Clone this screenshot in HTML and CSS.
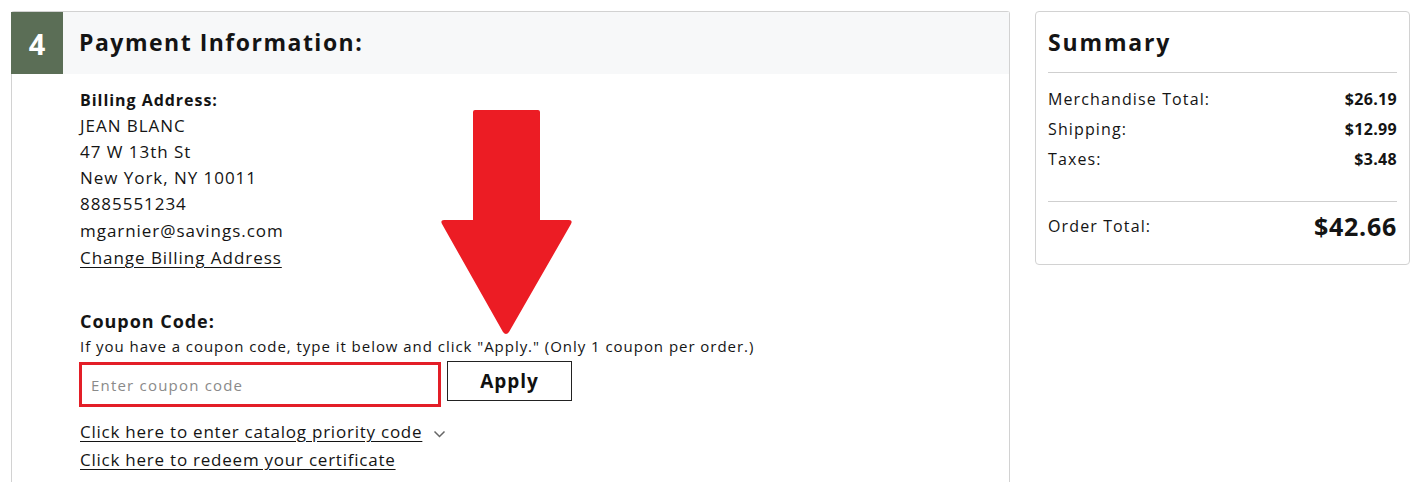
FILE: index.html
```html
<!DOCTYPE html>
<html>
<head>
<meta charset="utf-8">
<link rel="stylesheet" href="styles.css">
</head>
<body>
<div class="page">
  <section class="card pay">
    <div class="pay-head">
      <div class="step">4</div>
      <h2 class="pay-title">Payment Information:</h2>
    </div>
    <div class="pay-body">
      <div class="label">Billing Address:</div>
      <div class="line">JEAN BLANC</div>
      <div class="line">47 W 13th St</div>
      <div class="line">New York, NY 10011</div>
      <div class="line">8885551234</div>
      <div class="line">mgarnier@savings.com</div>
      <a class="line link" href="#">Change Billing Address</a>

      <div class="coupon-label">Coupon Code:</div>
      <div class="coupon-desc">If you have a coupon code, type it below and click "Apply." (Only 1 coupon per order.)</div>
      <div class="coupon-row">
        <input class="coupon-input" type="text" placeholder="Enter coupon code">
        <button class="apply">Apply</button>
      </div>
      <div class="links">
        <a class="link-row" href="#"><span class="u">Click here to enter catalog priority code</span>
          <svg class="chev" width="15" height="10" viewBox="0 0 15 10"><path d="M2.5 2.5 L7.5 7.5 L12.5 2.5" fill="none" stroke="#666" stroke-width="1.5"/></svg></a>
        <a class="link-row" href="#"><span class="u">Click here to redeem your certificate</span></a>
      </div>
    </div>
    <svg class="arrow" width="134" height="228" viewBox="0 0 134 228">
      <path d="M34 1 H97 Q99 1 99 3 V111 H128 Q132 111 130 115 L68 223 Q65 227 62 223 L1 115 Q-1 111 3 111 H32 V3 Q32 1 34 1 Z" fill="#ec1c24"/>
    </svg>
  </section>

  <aside class="card summary">
    <h2 class="sum-title">Summary</h2>
    <div class="sum-rows">
      <div class="sum-row"><span>Merchandise Total:</span><b>$26.19</b></div>
      <div class="sum-row"><span>Shipping:</span><b>$12.99</b></div>
      <div class="sum-row"><span>Taxes:</span><b>$3.48</b></div>
    </div>
    <div class="sum-total"><span>Order Total:</span><b>$42.66</b></div>
  </aside>
</div>
</body>
</html>
```

FILE: styles.css
```css
* { box-sizing: border-box; }
html, body { margin: 0; background: #fff; }
body {
  font-family: "Open Sans", "Liberation Sans", sans-serif;
  color: #141414;
  overflow: hidden;
  letter-spacing: 0.06em;
}
.page {
  display: flex;
  align-items: flex-start;
  gap: 25px;
  padding: 11px 0 0 11px;
}
.card {
  border: 1px solid #d2d2d2;
  border-radius: 4px;
  background: #fff;
}
.pay {
  position: relative;
  width: 999px;
  height: 500px;
  border-bottom: none;
  border-radius: 3px 3px 0 0;
}
.pay-head {
  display: flex;
  align-items: center;
  height: 62px;
  background: #f7f8f9;
}
.step {
  width: 52px;
  height: 62px;
  margin-left: -1px;
  background: #5b6e56;
  color: #fff;
  font-weight: 700;
  font-size: 29px;
  letter-spacing: 0;
  display: flex;
  align-items: center;
  justify-content: center;
}
.pay-title {
  margin: 0 0 0 16px;
  font-size: 23px;
  font-weight: 700;
  letter-spacing: 0.065em;
  padding-bottom: 2px;
}
.pay-body {
  padding: 13px 0 0 68px;
  display: flex;
  flex-direction: column;
  align-items: flex-start;
}
.label {
  font-weight: 700;
  font-size: 16px;
  line-height: 26px;
}
.line {
  font-size: 17px;
  line-height: 26px;
  color: #141414;
}
.line:nth-child(6), .line:nth-child(7) { margin-top: 1px; }
.link { text-decoration: underline; text-underline-offset: 3px; }
.coupon-label {
  margin-top: 37px;
  font-weight: 700;
  font-size: 18px;
  line-height: 26px;
}
.coupon-desc {
  font-size: 15px;
  line-height: 22px;
  margin-top: 1px;
}
.coupon-row {
  display: flex;
  align-items: flex-start;
  gap: 6px;
  margin-top: 5px;
  margin-left: -1px;
}
.coupon-input {
  width: 362px;
  height: 45px;
  border: 3px solid #e31e27;
  padding: 0 0 0 9px;
  font-family: inherit;
  font-size: 15px;
  letter-spacing: 0.08em;
  color: #222;
  outline: none;
  margin: 0;
}
.coupon-input::placeholder { color: #8a8a8a; }
.apply {
  width: 125px;
  height: 40px;
  margin: -1px 0 0 0;
  border: 1px solid #222;
  background: #fff;
  font-family: inherit;
  font-weight: 700;
  font-size: 19px;
  letter-spacing: 0.05em;
  color: #111;
  padding: 0;
}
.links {
  margin-top: 11px;
  display: flex;
  flex-direction: column;
}
.link-row {
  font-size: 17px;
  line-height: 28px;
  letter-spacing: 0.045em;
  color: #141414;
  text-decoration: none;
  display: flex;
  align-items: center;
  gap: 10px;
}
.u { text-decoration: underline; text-underline-offset: 3px; }
.chev { margin-top: 4px; }
.arrow {
  position: absolute;
  left: 429px;
  top: 97px;
}
.summary {
  width: 375px;
  padding: 0 12px 0 12px;
  height: 254px;
}
.sum-title {
  margin: 0;
  font-size: 23px;
  font-weight: 700;
  line-height: 30px;
  letter-spacing: 0.08em;
  padding: 15px 0 15px 0;
  border-bottom: 1px solid #cfcfcf;
}
.sum-rows {
  padding: 11px 0 27px 0;
  border-bottom: 1px solid #cfcfcf;
}
.sum-row, .sum-total {
  display: flex;
  justify-content: space-between;
  align-items: center;
  font-size: 16px;
  line-height: 30px;
}
.sum-row span, .sum-total span { letter-spacing: 0.07em; }
.sum-row b { font-weight: 700; font-size: 16px; letter-spacing: 0.02em; }
.sum-total { padding-top: 9px; line-height: 30px; }
.sum-total b { font-size: 25px; font-weight: 700; letter-spacing: 0.03em; }
```
